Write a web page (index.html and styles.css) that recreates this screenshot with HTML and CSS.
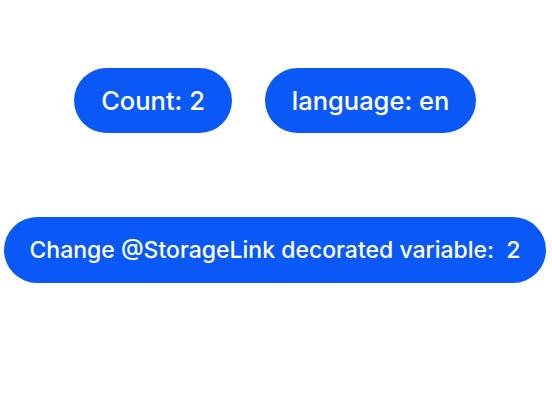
FILE: index.html
```html
<!DOCTYPE html>
<html lang="en">

<head>
	<meta charset="utf-8" />
	<meta name="viewport" content="width=device-width, initial-scale=1">
	<title>StorageLink</title>
	<link rel="stylesheet" href="styles.css">
</head>

<body>
	<div class="page">
		<div class="row">
			<button class="pill count">Count: 2</button>
			<button class="pill lang">language: en</button>
		</div>
		<button class="pill wide">Change @StorageLink decorated variable:&nbsp;&nbsp;2</button>
	</div>
</body>

</html>
```

FILE: styles.css
```css
body {
	margin: 0;
	background: #ffffff;
	font-family: Inter, 'Noto Sans', sans-serif;
}

.page {
	display: flex;
	flex-direction: column;
	align-items: center;
	padding-top: 68px;
	padding-right: 2px;
}

.row {
	display: flex;
	justify-content: center;
	gap: 33px;
}

.pill {
	background-color: #0a59f7;
	color: #ffffff;
	border: none;
	border-radius: 33px;
	height: 65px;
	font-family: inherit;
	font-size: 25.5px;
	font-weight: 500;
	padding: 0;
	display: flex;
	align-items: center;
	justify-content: center;
}

.count {
	width: 158px;
}

.lang {
	width: 211px;
}

.wide {
	width: 542px;
	height: 66px;
	margin-top: 84px;
	font-size: 23px;
}
```
